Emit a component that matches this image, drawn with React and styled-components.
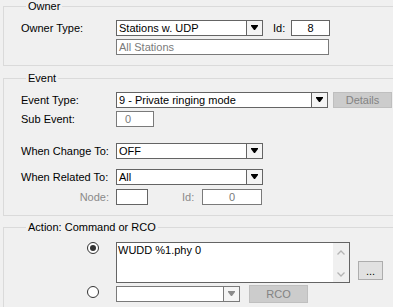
import React from "react";
import styled, { createGlobalStyle } from "styled-components";

const GlobalStyle = createGlobalStyle`
  body {
    margin: 0;
    background: #f0f0f0;
  }
`;

const Page = styled.div`
  width: 393px;
  height: 307px;
  overflow: hidden;
  background: #f0f0f0;
  font-family: "Liberation Sans", Arial, sans-serif;
  font-size: 11px;
  color: #000;
`;

const Group = styled.fieldset`
  box-sizing: border-box;
  width: 430px;
  margin: ${(p) => p.$top || 0}px 0 0 3px;
  padding: ${(p) => p.$pad || "7px 0 10px 17px"};
  border: 1px solid #dadada;
  min-width: 0;
`;

const Legend = styled.legend`
  margin-left: 5px;
  padding: 0 2px;
  line-height: 13px;
  font-size: 11px;
`;

const Row = styled.div`
  display: flex;
  align-items: ${(p) => p.$align || "center"};
  margin-top: ${(p) => p.$mt || 0}px;
`;

const Label = styled.div`
  width: ${(p) => p.$w || 95}px;
  flex: none;
  box-sizing: border-box;
  text-align: ${(p) => (p.$right ? "right" : "left")};
  padding-right: ${(p) => (p.$right ? 7 : 0)}px;
  margin-left: ${(p) => p.$ml || 0}px;
  color: ${(p) => (p.$dim ? "#8a8a8a" : "#000")};
  line-height: 16px;
`;

const Box = styled.div`
  box-sizing: border-box;
  width: ${(p) => p.$w}px;
  height: 16px;
  margin-left: ${(p) => p.$ml || 0}px;
  border: 1px solid ${(p) => (p.$dim ? "#7a7a7a" : "#646464")};
  background: #fff;
  line-height: 14px;
  padding: 0 ${(p) => p.$pl ?? 2}px;
  text-align: ${(p) => (p.$center ? "center" : "left")};
  color: ${(p) => (p.$dim ? "#7a7a7a" : "#000")};
  white-space: nowrap;
  overflow: hidden;
`;

const ComboBox = styled.div`
  box-sizing: border-box;
  display: flex;
  width: ${(p) => p.$w}px;
  height: 16px;
  border: 1px solid ${(p) => (p.$dim ? "#7a7a7a" : "#646464")};
  background: #fff;
`;

const ComboText = styled.div`
  flex: 1;
  padding-left: 2px;
  line-height: 14px;
  white-space: nowrap;
  overflow: hidden;
`;

const ComboButton = styled.div`
  width: 15px;
  display: flex;
  align-items: center;
  justify-content: center;
  border-left: 1px solid ${(p) => (p.$dim ? "#7a7a7a" : "#646464")};
  background: #f4f4f4;
`;

const Button = styled.div`
  box-sizing: border-box;
  width: ${(p) => p.$w}px;
  height: ${(p) => p.$h || 16}px;
  margin-left: ${(p) => p.$ml || 0}px;
  margin-top: ${(p) => p.$mt || 0}px;
  align-self: ${(p) => p.$self || "auto"};
  display: flex;
  align-items: center;
  justify-content: center;
  background: ${(p) => (p.$dim ? "#cccccc" : "#e1e1e1")};
  border: 1px solid ${(p) => (p.$dim ? "#bfbfbf" : "#adadad")};
  color: ${(p) => (p.$dim ? "#838383" : "#000")};
`;

const RadioCell = styled.div`
  width: 95px;
  flex: none;
  box-sizing: border-box;
  display: flex;
  justify-content: flex-end;
  padding-right: 17px;
  margin-bottom: ${(p) => p.$mb || 0}px;
`;

const Radio = styled.span`
  box-sizing: border-box;
  width: 12px;
  height: 12px;
  border-radius: 50%;
  border: 1px solid #333;
  background: #fff;
  display: flex;
  align-items: center;
  justify-content: center;
  &::after {
    content: "";
    width: 6px;
    height: 6px;
    border-radius: 50%;
    background: ${(p) => (p.$checked ? "#333" : "transparent")};
  }
`;

const TextArea = styled.div`
  box-sizing: border-box;
  display: flex;
  width: 234px;
  height: 41px;
  border: 1px solid #646464;
  background: #fff;
`;

const AreaText = styled.div`
  flex: 1;
  padding: 1px 1px;
  line-height: 12px;
`;

const ScrollBar = styled.div`
  width: 16px;
  display: flex;
  flex-direction: column;
  justify-content: space-between;
  align-items: center;
  padding: 7px 0 5px;
  background: #f0f0f0;
`;

const Arrow = ({ dim }) => (
  <svg width="7" height="6" viewBox="0 0 7 6">
    <polygon points="0,0 7,0 7,1 4,5 3,5 0,1" fill={dim ? "#8a8a8a" : "#000"} />
  </svg>
);

const Chevron = ({ up }) => (
  <svg width="8" height="5" viewBox="0 0 8 5">
    <polyline
      points={up ? "0.5,4.5 4,1 7.5,4.5" : "0.5,0.5 4,4 7.5,0.5"}
      fill="none"
      stroke="#b4b4b4"
      strokeWidth="1.3"
    />
  </svg>
);

const Combo = ({ w, text, dim }) => (
  <ComboBox $w={w} $dim={dim}>
    <ComboText>{text}</ComboText>
    <ComboButton $dim={dim}>
      <Arrow dim={dim} />
    </ComboButton>
  </ComboBox>
);

export default function App() {
  return (
    <Page>
      <GlobalStyle />
      <Group>
        <Legend>Owner</Legend>
        <Row>
          <Label>Owner Type:</Label>
          <Combo w={147} text="Stations w. UDP" />
          <Label $w={18} $ml={10}>
            Id:
          </Label>
          <Box $w={39} $center>
            8
          </Box>
        </Row>
        <Row $mt={3}>
          <Label />
          <Box $w={213} $dim>
            All Stations
          </Box>
        </Row>
      </Group>

      <Group $top={6}>
        <Legend>Event</Legend>
        <Row>
          <Label>Event Type:</Label>
          <Combo w={212} text="9 - Private ringing mode" />
          <Button $w={59} $ml={5} $dim>
            Details
          </Button>
        </Row>
        <Row $mt={3}>
          <Label>Sub Event:</Label>
          <Box $w={38} $pl={8} $dim>
            0
          </Box>
        </Row>
        <Row $mt={16}>
          <Label>When Change To:</Label>
          <Combo w={147} text="OFF" />
        </Row>
        <Row $mt={10}>
          <Label>When Related To:</Label>
          <Combo w={147} text="All" />
        </Row>
        <Row $mt={4}>
          <Label $right $dim>
            Node:
          </Label>
          <Box $w={32} />
          <Label $w={20} $ml={34} $dim>
            Id:
          </Label>
          <Box $w={60} $center $dim>
            0
          </Box>
        </Row>
      </Group>

      <Group $top={5} $pad="8px 0 10px 17px">
        <Legend>Action: Command or RCO</Legend>
        <Row $align="flex-start">
          <RadioCell>
            <Radio $checked />
          </RadioCell>
          <TextArea>
            <AreaText>WUDD %1.phy 0</AreaText>
            <ScrollBar>
              <Chevron up />
              <Chevron />
            </ScrollBar>
          </TextArea>
          <Button $w={25} $h={19} $ml={8} $mt={19}>
            ...
          </Button>
        </Row>
        <Row $mt={2}>
          <RadioCell $mb={4}>
            <Radio />
          </RadioCell>
          <Combo w={124} dim />
          <Button $w={59} $h={18} $ml={9} $dim>
            RCO
          </Button>
        </Row>
      </Group>
    </Page>
  );
}
